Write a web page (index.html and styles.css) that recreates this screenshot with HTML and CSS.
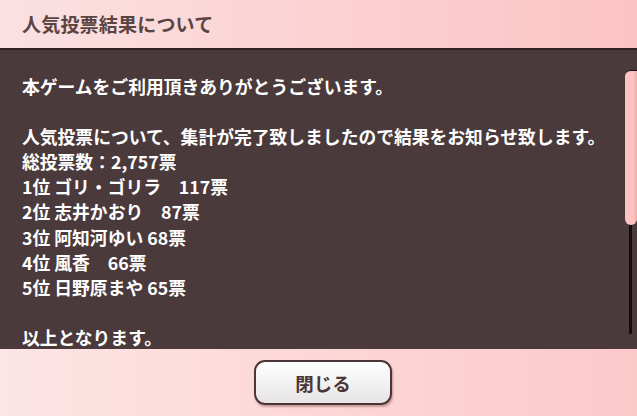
FILE: index.html
```html
<!DOCTYPE html>
<html lang="ja">
<head>
    <meta charset="UTF-8">
    <title>人気投票結果について</title>
    <link rel="stylesheet" href="styles.css">
</head>
<body>
    <div class="dialog">
        <header class="dialog-head">
            <h1>人気投票結果について</h1>
        </header>
        <div class="dialog-body">
            <div class="message">本ゲームをご利用頂きありがとうございます。

人気投票について、集計が完了致しましたので結果をお知らせ致します。
総投票数：2,757票
1位 ゴリ・ゴリラ　117票
2位 志井かおり　87票
3位 阿知河ゆい 68票
4位 風香　66票
5位 日野原まや 65票

以上となります。</div>
            <!-- scrollbar -->
            <div class="track"></div>
            <div class="thumb"></div>
        </div>
        <footer class="dialog-foot">
            <button class="close-btn">閉じる</button>
        </footer>
    </div>
</body>
</html>
```

FILE: styles.css
```css
body {
    margin: 0;
    padding: 0;
    font-family: "Noto Sans CJK JP", "Noto Sans", sans-serif;
}
.dialog {
    width: 637px;
    height: 416px;
    display: flex;
    flex-direction: column;
    overflow: hidden;
}
.dialog-head {
    height: 48px;
    background: linear-gradient(to right, #fbe1e2, #fcc3c3);
    border-bottom: 2px solid #2f2325;
    display: flex;
    align-items: center;
    padding-left: 22px;
}
.dialog-head h1 {
    margin: 0 0 2px 0;
    font-size: 19px;
    font-weight: bold;
    color: #5b4543;
    letter-spacing: 0.2px;
}
.dialog-body {
    position: relative;
    height: 299px;
    background-color: #4b3a3b;
    overflow: hidden;
}
.message {
    padding: 24px 0 0 22px;
    color: #fff;
    font-size: 17.8px;
    font-weight: bold;
    line-height: 25.1px;
    white-space: pre-line;
}
.track {
    position: absolute;
    left: 629px;
    top: 170px;
    width: 3px;
    height: 114px;
    background-color: #150d0e;
}
.thumb {
    position: absolute;
    left: 625px;
    top: 20px;
    width: 12px;
    height: 154px;
    background: linear-gradient(to right, #ffc2c2 70%, #f0a6a6);
    border-radius: 6px 0 6px 6px;
    border-top: 1px solid #150d0e;
}
.dialog-foot {
    flex: 1;
    background: linear-gradient(to right, #fde5e5, #fcc9c9);
    display: flex;
    justify-content: center;
    padding: 11px 0 0 9px;
}
.close-btn {
    width: 138px;
    height: 45px;
    border: 2px solid #4a3537;
    border-radius: 11px;
    background: linear-gradient(to bottom, #ffffff, #e6e4e4);
    box-shadow: 1px 2px 2px rgba(120, 60, 60, 0.4);
    font-family: "Noto Sans CJK JP", sans-serif;
    font-size: 18.5px;
    font-weight: bold;
    color: #4a3436;
    padding: 0;
}
```
